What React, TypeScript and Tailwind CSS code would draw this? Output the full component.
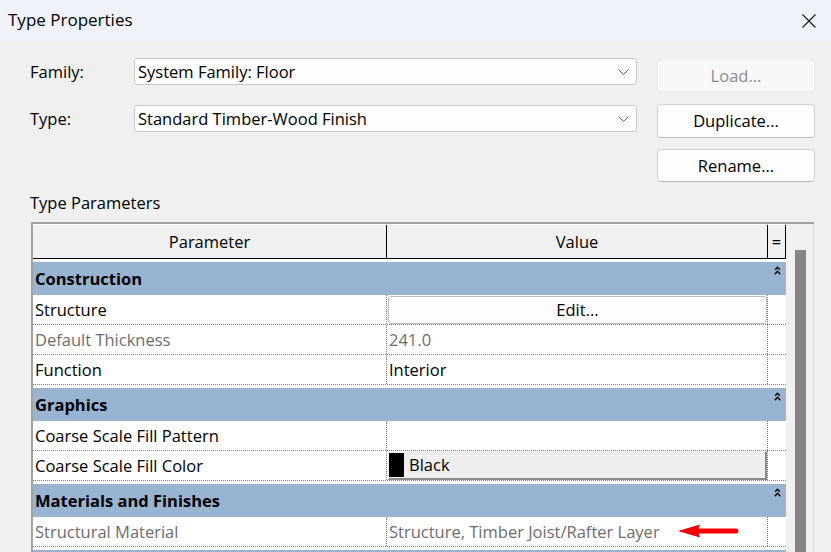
import React from 'react';

// Row definitions for the parameter grid
type ParamRow =
    | { kind: 'group'; label: string }
    | { kind: 'row'; label: string; value?: string; muted?: boolean; control?: 'edit' | 'color'; arrow?: boolean };

const rows: ParamRow[] = [
    { kind: 'group', label: 'Construction' },
    { kind: 'row', label: 'Structure', control: 'edit' },
    { kind: 'row', label: 'Default Thickness', value: '241.0', muted: true },
    { kind: 'row', label: 'Function', value: 'Interior' },
    { kind: 'group', label: 'Graphics' },
    { kind: 'row', label: 'Coarse Scale Fill Pattern', value: '' },
    { kind: 'row', label: 'Coarse Scale Fill Color', control: 'color' },
    { kind: 'group', label: 'Materials and Finishes' },
    { kind: 'row', label: 'Structural Material', value: 'Structure, Timber Joist/Rafter Layer', muted: true, arrow: true },
    { kind: 'group', label: '' },
];

const CloseIcon = () => (
    <svg width="16" height="16" viewBox="0 0 16 16" fill="none">
        <path d="M1.5 1.5 L14.5 14.5 M14.5 1.5 L1.5 14.5" stroke="#1b1b1b" strokeWidth="1.2" />
    </svg>
);

const ComboChevron = () => (
    <svg width="11" height="6" viewBox="0 0 11 6" fill="none">
        <path d="M0.5 0.5 L5.5 5.5 L10.5 0.5" stroke="#5f5f5f" strokeWidth="1" />
    </svg>
);

// double caret shown on group headers
const Collapse = () => (
    <svg width="7" height="9" viewBox="0 0 7 9" fill="none">
        <path d="M1.2 3.8 L3.5 1.2 L5.8 3.8" stroke="#000" strokeWidth="1.4" />
        <path d="M0.8 8.2 L3.5 5.2 L6.2 8.2" stroke="#000" strokeWidth="1.4" />
    </svg>
);

const RedArrow = () => (
    <svg width="62" height="16" viewBox="0 0 62 16" fill="none">
        <path d="M0 8 L22 1.5 Q19 8 22 14.5 Z" fill="#f40000" />
        <path d="M18 8 L58 8" stroke="#f40000" strokeWidth="5" strokeLinecap="round" />
    </svg>
);

const Combo = ({ text }: { text: string }) => (
    <div className="w-[503px] h-[27px] bg-[#fdfdfd] border border-[#c9c9c9] rounded-[3px] flex items-center justify-between pl-[3px] pr-[7px]">
        <span>{text}</span>
        <ComboChevron />
    </div>
);

const SideButton = ({ label, disabled, h }: { label: string; disabled?: boolean; h: string }) => (
    <div
        className={`w-[158px] ${h} rounded-[4px] flex items-center justify-center ${
            disabled
                ? 'bg-[#f8f8f8] border border-[#ececec] text-[#8a8a8a]'
                : 'bg-[#fdfdfd] border border-[#d3d3d3] border-b-[#b9b9b9]'
        }`}
    >
        {label}
    </div>
);

const GroupRow = ({ label }: { label: string }) => (
    <div className="mt-[3px] h-[33px] bg-[#99b4d1] flex shrink-0">
        <div className="w-[735px] pl-[2px] flex items-center font-bold">{label}</div>
        <div className="w-[18px] flex justify-center pt-[4px]">
            <Collapse />
        </div>
    </div>
);

const DataRow = ({ row }: { row: Extract<ParamRow, { kind: 'row' }> }) => (
    <div className="h-[30px] flex shrink-0 border-b border-dotted border-[#7c7c7c]">
        <div className={`w-[354px] pl-[2px] flex items-center border-r border-dotted border-[#7c7c7c] ${row.muted ? 'text-[#6d6d6d]' : ''}`}>
            {row.label}
        </div>
        <div className="w-[381px] relative flex items-center border-r border-dotted border-[#7c7c7c]">
            {row.control === 'edit' && (
                <div className="ml-[1px] mt-[1px] self-stretch w-[379px] bg-[#fdfdfd] border border-[#bdbdbd] rounded-[3px] flex items-center justify-center">
                    Edit...
                </div>
            )}
            {row.control === 'color' && (
                <div className="ml-[1px] self-stretch w-[379px] bg-[#efefef] border border-[#f7f7f7] border-r-2 border-b-2 border-r-[#8a8a8a] border-b-[#8a8a8a] flex items-center">
                    <div className="w-[15px] h-[24px] bg-black" />
                    <span className="ml-[5px]">Black</span>
                </div>
            )}
            {row.value !== undefined && (
                <span className={`pl-[2px] ${row.muted ? 'text-[#6d6d6d]' : ''}`}>{row.value}</span>
            )}
            {row.arrow && (
                <div className="absolute left-[291px] top-[6px]">
                    <RedArrow />
                </div>
            )}
        </div>
        <div className="w-[18px]" />
    </div>
);

export default function App() {
    return (
        <div className="w-[831px] h-[552px] overflow-hidden bg-[#f0f0f0] text-black text-[16.5px] leading-[22px] font-['Open_Sans',sans-serif] flex flex-col">
            {/* title bar */}
            <div className="h-[41px] shrink-0 bg-[#eff2f9] flex items-center justify-between pl-[8px] pr-[14px]">
                <span className="text-[17px] -mt-[2px]">Type Properties</span>
                <CloseIcon />
            </div>

            {/* family / type pickers and buttons */}
            <div className="flex pt-[17px] pl-[30px] shrink-0">
                <div className="w-[607px]">
                    <div className="flex items-center">
                        <span className="w-[104px]">Family:</span>
                        <Combo text="System Family: Floor" />
                    </div>
                    <div className="flex items-center mt-[20px]">
                        <span className="w-[104px]">Type:</span>
                        <Combo text="Standard Timber-Wood Finish" />
                    </div>
                </div>
                <div className="ml-[20px] flex flex-col pt-[1px]">
                    <SideButton label="Load..." disabled h="h-[33px]" />
                    <div className="mt-[12px]">
                        <SideButton label="Duplicate..." h="h-[34px]" />
                    </div>
                    <div className="mt-[11px]">
                        <SideButton label="Rename..." h="h-[33px]" />
                    </div>
                </div>
            </div>

            <div className="pl-[30px] mt-[10px] shrink-0">Type Parameters</div>

            {/* parameter grid */}
            <div className="ml-[31px] mt-[8px] w-[783px] flex-1 min-h-0 flex border-t-2 border-l-2 border-[#a2a2a2]">
                <div className="w-[753px] bg-white flex flex-col overflow-hidden">
                    <div className="h-[35px] shrink-0 flex bg-[#f0f0f0] border-t border-white border-b border-b-black">
                        <div className="w-[354px] flex items-center justify-center border-r border-black">Parameter</div>
                        <div className="w-[381px] flex items-center justify-center border-r border-black">Value</div>
                        <div className="w-[18px] flex items-center justify-center border-r border-black">=</div>
                    </div>
                    {rows.map((r, i) =>
                        r.kind === 'group' ? <GroupRow key={i} label={r.label} /> : <DataRow key={i} row={r} />
                    )}
                </div>
                {/* vertical scrollbar */}
                <div className="w-[28px] bg-[#f0f0f0] border-r border-[#d9d9d9] pl-[9px] pt-[26px] flex">
                    <div className="w-[11px] bg-[#868686]" />
                </div>
            </div>
        </div>
    );
}
